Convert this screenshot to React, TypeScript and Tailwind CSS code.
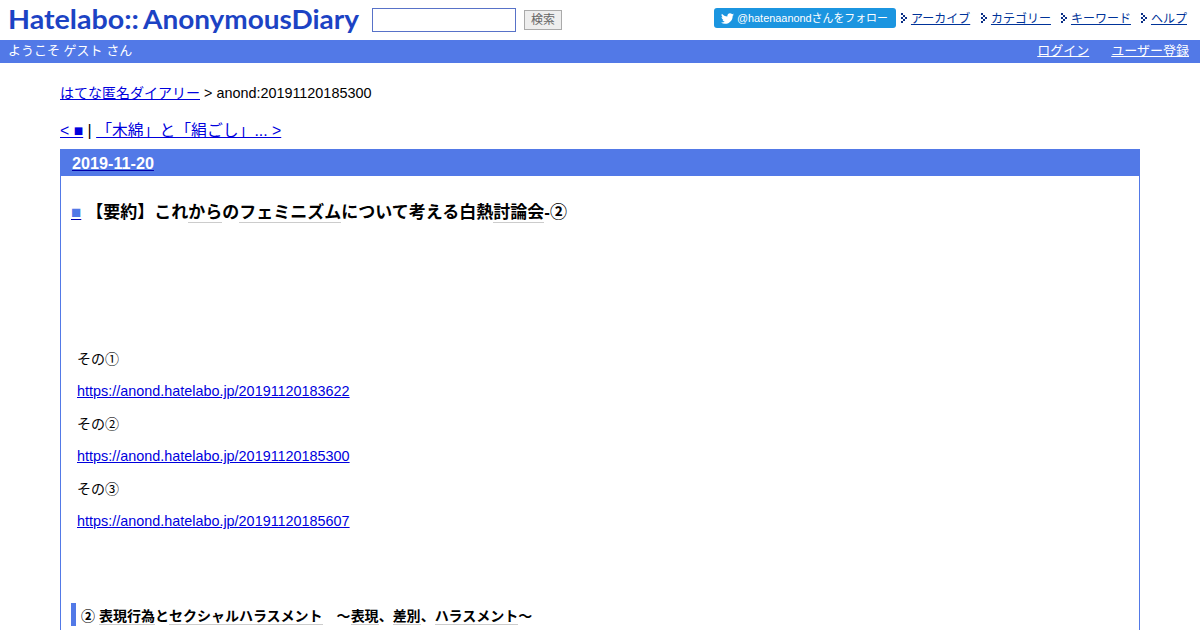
import { FaTwitter } from 'react-icons/fa'

const menu = ['アーカイブ', 'カテゴリー', 'キーワード', 'ヘルプ']

const entries = [
  { label: 'その①', url: 'https://anond.hatelabo.jp/20191120183622' },
  { label: 'その②', url: 'https://anond.hatelabo.jp/20191120185300' },
  { label: 'その③', url: 'https://anond.hatelabo.jp/20191120185607' },
]

const Arrow = () => (
  <svg width="7" height="10" viewBox="0 0 7 10" fill="#0a2f86" shapeRendering="crispEdges" className="mr-[3px]">
    <path d="M0 0h2v2H0zM2 2h2v2H2zM4 4h2v2H4zM2 6h2v2H2zM0 8h2v2H0zM0 4h2v2H0z" />
  </svg>
)

const Keyword = ({ children }: { children: string }) => (
  <a href="#" className="border-b border-[#cccccc]">{children}</a>
)

const Header = () => (
  <header className="flex h-10 items-start justify-between pr-[13px]">
    <div className="flex">
      <svg width="372" height="40" fill="#1c43c4" className="font-['Lato'] text-[26px] font-bold">
        <text x="8" y="29" textLength="131" lengthAdjust="spacingAndGlyphs">Hatelabo::</text>
        <text x="143" y="29" textLength="216" lengthAdjust="spacingAndGlyphs">AnonymousDiary</text>
      </svg>
      <input className="mt-2 h-6 w-36 border border-[#5872c8] bg-white px-1 outline-none" />
      <button className="mt-[10px] ml-2 h-5 w-[38px] border border-[#aaaaaa] bg-[#eeeeee] text-[12px] leading-[17px] text-[#666666]">
        検索
      </button>
    </div>
    <div className="mt-2 flex h-5 items-center">
      <a href="#" className="mr-[5px] flex h-5 w-[182px] items-center rounded-[3px] bg-[#1b95e0] pl-[7px] text-[10.9px] whitespace-nowrap text-white">
        <FaTwitter className="mr-[3px] size-[13px] shrink-0" />
        @hatenaanondさんをフォロー
      </a>
      <nav className="flex gap-[10px] text-[12px] leading-5 text-[#003399]">
        {menu.map((item) => (
          <span key={item} className="flex items-center first:w-[70px]">
            <Arrow />
            <a href="#" className="pt-px underline">{item}</a>
          </span>
        ))}
      </nav>
    </div>
  </header>
)

const App = () => {
  return (
    <div className="h-[630px] overflow-hidden bg-white font-['Liberation_Sans','Noto_Sans_CJK_JP',sans-serif] text-[14px] text-black">
      <Header />

      <div className="flex h-[23px] justify-between bg-[#5279e7] pr-[11px] pl-2 text-[13px] leading-[22px] text-white">
        <span>ようこそ ゲスト さん</span>
        <div className="flex gap-[22px]">
          <a href="#" className="underline">ログイン</a>
          <a href="#" className="underline">ユーザー登録</a>
        </div>
      </div>

      <main className="px-[60px] pt-5">
        <div className="leading-5">
          <a href="#" className="text-[#0000dd] underline">はてな匿名ダイアリー</a>
          <span className="text-[14.4px]"> &gt; anond:20191120185300</span>
        </div>
        <div className="mt-[18px] text-[15.84px] leading-5">
          <a href="#" className="text-[#0000dd] underline">&lt; ■</a> |{' '}
          <a href="#" className="text-[#0000dd] underline">「木綿」と「絹ごし」... &gt;</a>
        </div>

        {/* Day */}
        <div className="mt-2 h-[600px] border border-[#5279e7]">
          <h2 className="h-[26px] bg-[#5279e7] pl-[11px] text-[16.2px] leading-[26px] font-bold">
            <a href="#" className="text-white underline decoration-[#0000aa]">2019-11-20</a>
          </h2>
          <div className="px-[10px]">
            <h3 className="mt-[26px] flex text-[17px] leading-[22px] font-bold">
              <a href="#" className="mr-[5px] text-[#5279e7] underline decoration-[#0000aa]">■</a>
              <span>
                【要約】これ<Keyword>から</Keyword>の<Keyword>フェミニズム</Keyword>について考える白熱<Keyword>討論会</Keyword>-②
              </span>
            </h3>

            <div className="mt-[125px] px-[6px]">
              {entries.map((entry) => (
                <div key={entry.url} className="h-[65px] leading-5">
                  <p>{entry.label}</p>
                  <p className="mt-3 text-[14.4px]">
                    <a href="#" className="text-[#0000dd] underline">{entry.url}</a>
                  </p>
                </div>
              ))}
            </div>

            <h4 className="mt-[59px] border-l-[5px] border-[#5279e7] pt-[3px] pl-[5px] leading-5 font-bold">
              ② <Keyword>表現行為</Keyword>と<Keyword>セクシャルハラスメント</Keyword>　～<Keyword>表現</Keyword>、<Keyword>差別</Keyword>、<Keyword>ハラスメント</Keyword>～
            </h4>
          </div>
        </div>
      </main>
    </div>
  )
}

export default App
